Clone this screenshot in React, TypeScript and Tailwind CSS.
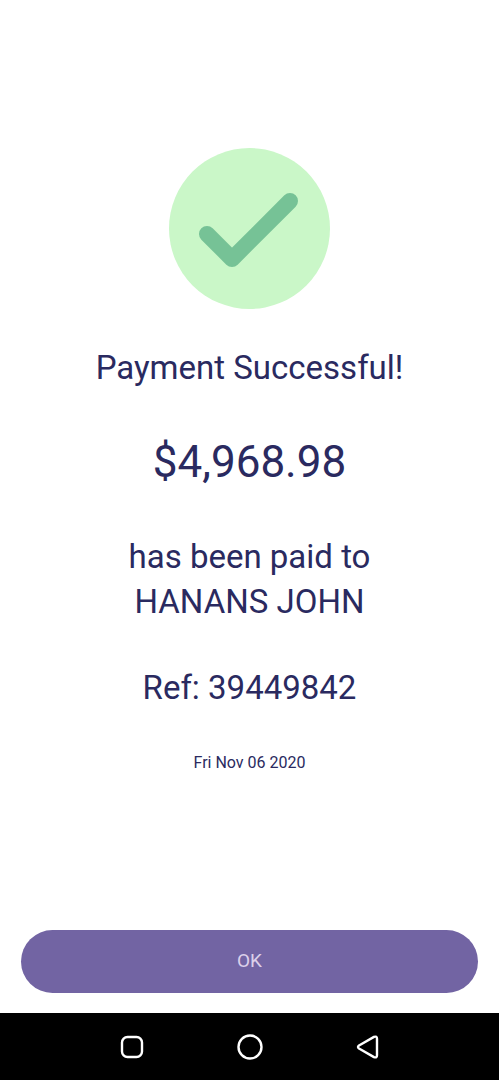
import React, { FC, ReactElement } from "react";

const SuccessIcon: FC = (): ReactElement => {
  return (
    <svg viewBox="0 0 161 161" className="w-[161px] h-[161px]" aria-hidden="true">
      <circle cx="80.5" cy="80.5" r="80.5" fill="#caf7c8" />
      <path
        d="M38 86 L63 111 L121 53"
        fill="none"
        stroke="#76c296"
        strokeWidth="16"
        strokeLinecap="round"
        strokeLinejoin="round"
      />
    </svg>
  );
};

const NavigationBar: FC = (): ReactElement => {
  return (
    <nav className="flex items-center justify-center gap-[86px] h-[67px] bg-black text-white">
      <button aria-label="Recent apps">
        <svg viewBox="0 0 32 32" className="w-8 h-8" fill="none" stroke="currentColor" strokeWidth="2.4">
          <rect x="6" y="6" width="20" height="20" rx="5.5" />
        </svg>
      </button>
      <button aria-label="Home">
        <svg viewBox="0 0 32 32" className="w-8 h-8" fill="none" stroke="currentColor" strokeWidth="2.4">
          <circle cx="16" cy="16" r="11.5" />
        </svg>
      </button>
      <button aria-label="Back">
        <svg viewBox="0 0 32 32" className="w-8 h-8" fill="none" stroke="currentColor" strokeWidth="2.4" strokeLinejoin="round">
          <path d="M7 14.5 L22 5.9 Q25 4.8 25 7.8 V24.2 Q25 27.2 22 26.1 L7 17.5 Q5 16 7 14.5 Z" />
        </svg>
      </button>
    </nav>
  );
};

const App: FC = (): ReactElement => {
  return (
    <div className="flex flex-col min-h-screen bg-white text-[#2a2a60] font-[Roboto,sans-serif]">
      <main className="flex flex-col flex-1 items-center pt-[148px] text-center">
        <SuccessIcon />
        <h1 className="mt-9 text-[33px] leading-[45px]">Payment Successful!</h1>
        <p className="mt-[41px] text-[44px] leading-[62px]">$4,968.98</p>
        <p className="mt-[41px] text-[33px] leading-[45px]">
          has been paid to
          <br />
          HANANS JOHN
        </p>
        <p className="mt-[41px] text-[33px] leading-[45px]">Ref: 39449842</p>
        <p className="mt-[41px] text-base leading-6">Fri Nov 06 2020</p>
      </main>
      <div className="px-[21px] pb-5">
        <button className="w-full h-[63px] rounded-full bg-[#7264a3] text-[19px] text-[#dcd0ea]">OK</button>
      </div>
      <NavigationBar />
    </div>
  );
};

export default App;
